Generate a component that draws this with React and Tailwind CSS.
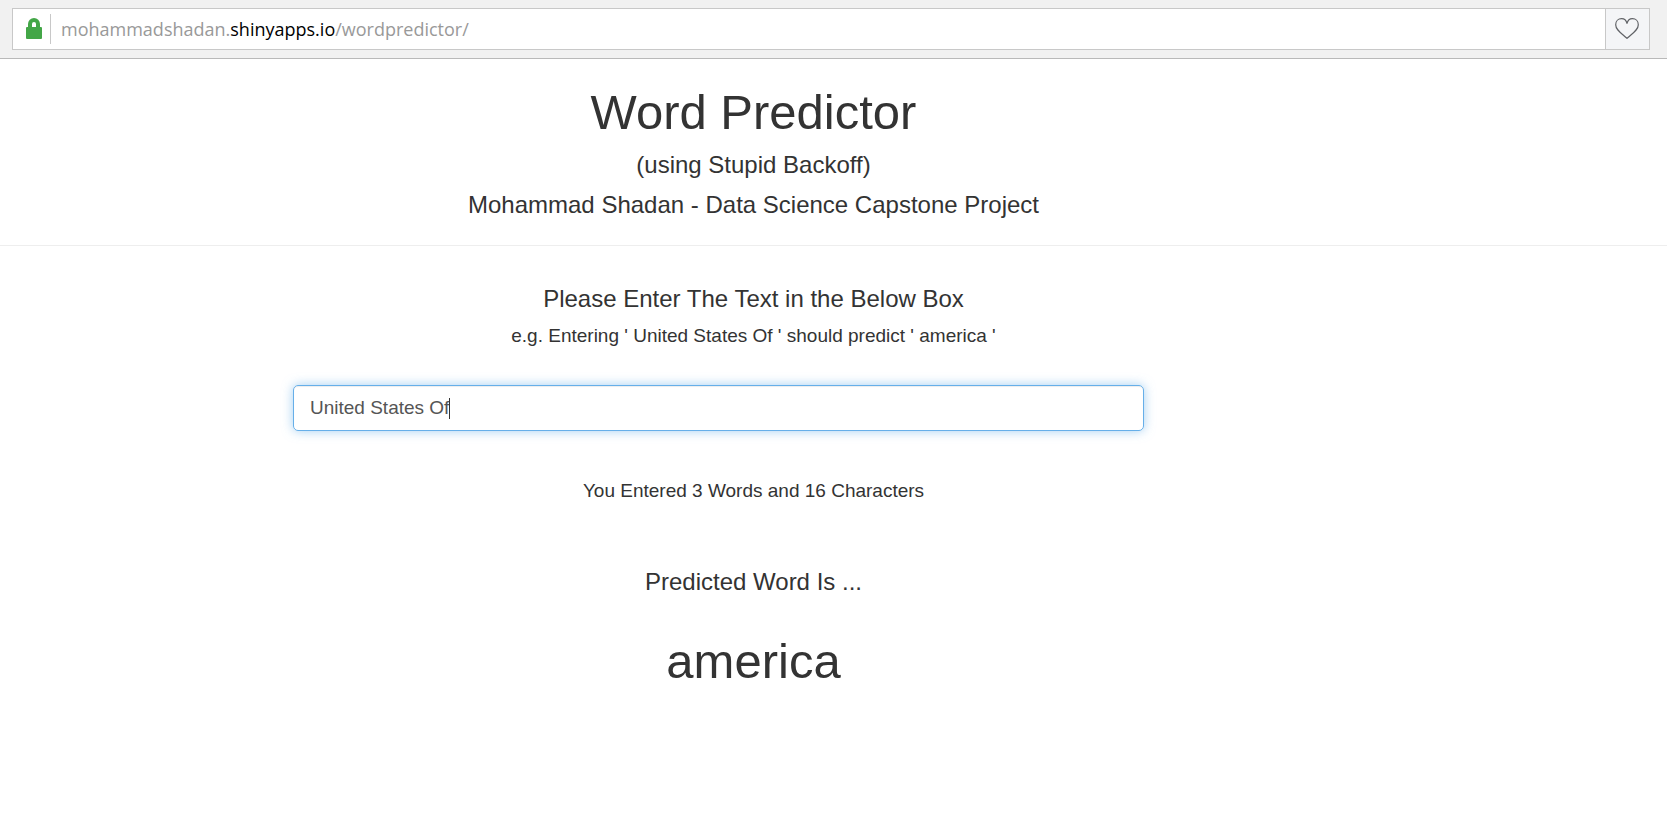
import { useState } from "react";

function LockIcon() {
  return (
    <svg className="h-[21px] w-4 shrink-0" viewBox="0 0 16 21" fill="none" aria-hidden="true">
      <rect x="0" y="9" width="16" height="12" rx="1" fill="#43a647" />
      <path d="M4 10V6a4 4 0 0 1 8 0v4" stroke="#43a647" strokeWidth="4" />
    </svg>
  );
}

function HeartIcon() {
  return (
    <svg className="h-[21px] w-6" viewBox="0 0 24 21" fill="none" stroke="#606266" strokeWidth="1.2" strokeLinejoin="round" aria-hidden="true">
      <path d="M12 5.400C11.200 2.200 9 .7 6.600.7 3.200.7.7 3.200.7 6.700c0 5.300 5.800 8.500 11.300 13.600C17.500 15.200 23.300 12 23.300 6.700 23.300 3.200 20.800.7 17.400.7 15 .7 12.800 2.200 12 5.400Z" />
    </svg>
  );
}

function AddressBar() {
  return (
    <header className="border-b border-[#b9b9b9] bg-[#f1f1f1] pt-2 pr-[17px] pb-2 pl-3">
      <div className="flex h-[42px] border border-[#c8c8c8] bg-white">
        <div className="flex min-w-0 flex-1 items-center pb-px pl-[13px]">
          <LockIcon />
          <span className="ml-2 h-[30px] w-px bg-[#c8c8c8]" />
          <div
            role="textbox"
            aria-label="Address"
            contentEditable
            suppressContentEditableWarning
            className="ml-[10px] min-w-0 flex-1 truncate font-['Open_Sans',sans-serif] text-[18px] leading-7 text-[#999999] outline-none"
          >
            mohammadshadan.<span className="text-black">shinyapps.io</span>/wordpredictor/
          </div>
        </div>
        <button type="button" aria-label="Add to bookmarks" className="flex w-[44px] shrink-0 items-center justify-center border-l border-[#c8c8c8] bg-[#f4f5f7] pr-0.5 pb-0.5">
          <HeartIcon />
        </button>
      </div>
    </header>
  );
}

export default function App() {
  const [text, setText] = useState("United States Of");
  const words = text.trim() ? text.trim().split(/\s+/).length : 0;

  return (
    <div className="min-h-screen bg-white font-['Liberation_Sans',Arial,sans-serif] text-[#333333]">
      <AddressBar />
      <main>
        <div className="border-b border-[#eeeeee] pt-[26px] pr-40 pb-[27px] text-center">
          <h1 className="text-[49px] leading-[54px]">Word Predictor</h1>
          <h2 className="mt-3 text-[24px] leading-[27px]">(using Stupid Backoff)</h2>
          <h2 className="mt-[13px] text-[24px] leading-[27px]">Mohammad Shadan - Data Science Capstone Project</h2>
        </div>
        <div className="pt-[39px] pr-40 pb-10 text-center">
          <label htmlFor="phrase" className="block text-[24px] leading-[27px]">
            Please Enter The Text in the Below Box
          </label>
          <p className="mt-[13px] text-[19px] leading-[21px]">e.g. Entering ' United States Of ' should predict ' america '</p>
          <div className="mt-[39px] flex justify-center pr-[70px]">
            <label
              htmlFor="phrase"
              className="flex h-[46px] w-full max-w-[851px] cursor-text items-center rounded-[5px] border border-[#66afe9] px-4 shadow-[inset_0_1px_1px_rgba(0,0,0,0.075),0_0_11px_rgba(102,175,233,0.6)]"
            >
              <input
                id="phrase"
                type="text"
                value={text}
                onChange={(e) => setText(e.target.value)}
                className="field-sizing-content max-w-full text-[19px] leading-[26px] text-[#555555] caret-transparent outline-none"
              />
              <span className="h-[21px] w-px bg-[#333333]" />
            </label>
          </div>
          <p className="mt-[49px] text-[19px] leading-[21px]">
            {`You Entered ${words} Words and ${text.length} Characters`}
          </p>
          <h2 className="mt-[67px] text-[24px] leading-[27px]">Predicted Word Is ...</h2>
          <p className="mt-[39px] text-[49px] leading-[54px]">america</p>
        </div>
      </main>
    </div>
  );
}
